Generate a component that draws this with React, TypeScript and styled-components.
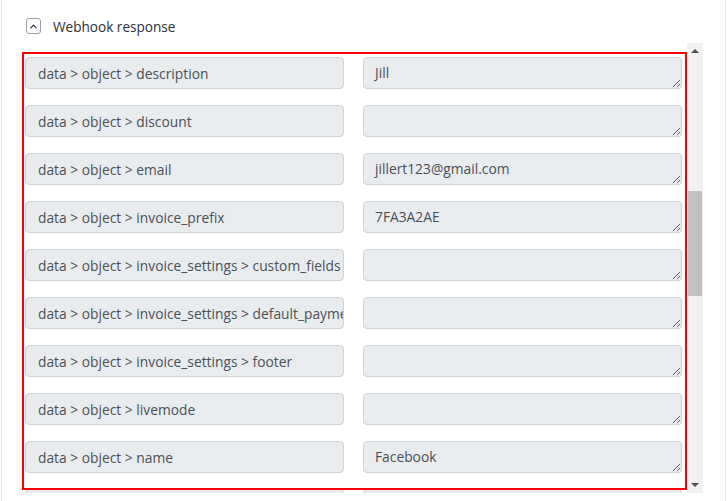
import React from "react";
import styled, { createGlobalStyle } from "styled-components";
import { ChevronUp } from "lucide-react";

const GlobalStyle = createGlobalStyle`
  html, body {
    margin: 0;
    padding: 0;
    background: #fff;
  }
  body {
    font-family: "Open Sans", "Liberation Sans", sans-serif;
    color: #495057;
  }
`;

const Card = styled.div`
  margin-left: 1px;
  width: 725px;
  min-height: 501px;
  box-sizing: border-box;
  border-left: 1px solid #e4e8ee;
  border-right: 1px solid #e4e8ee;
  padding: 16px 0 0 20px;
`;

const Header = styled.div`
  display: flex;
  align-items: center;
  gap: 12px;
  height: 20px;
  padding-left: 4px;
`;

const ToggleButton = styled.button`
  width: 15px;
  height: 16px;
  padding: 0;
  display: flex;
  align-items: center;
  justify-content: center;
  border: 1px solid #9aa0a6;
  border-radius: 3px;
  background: #fff;
  color: #1c2a44;
`;

const Title = styled.span`
  font-size: 13.6px;
  color: #2c3038;
`;

const ScrollArea = styled.div`
  position: relative;
  margin-top: 7px;
  width: 681px;
  height: 450px;
  display: flex;
`;

const Scroller = styled.div`
  flex: 1;
  height: 100%;
  overflow-y: scroll;
  scrollbar-width: none;
  &::-webkit-scrollbar {
    display: none;
  }
`;

const Rows = styled.div`
  display: flex;
  flex-direction: column;
  gap: 16px;
  padding: 8px 5px 32px 3px;
`;

const Row = styled.div`
  display: grid;
  grid-template-columns: 1fr 1fr;
  column-gap: 19px;
  align-items: start;
`;

const KeyField = styled.div`
  height: 32px;
  box-sizing: border-box;
  padding: 0 12px;
  display: flex;
  align-items: center;
  background: #e9ecef;
  border: 1px solid #ced4da;
  border-radius: 4px;
  font-size: 13.8px;
  color: #495057;
  white-space: nowrap;
  overflow: hidden;
`;

const ValueField = styled.textarea`
  display: block;
  width: 100%;
  height: 32px;
  box-sizing: border-box;
  margin: 0;
  padding: 5px 11px 3px;
  background: #e9ecef;
  border: 1px solid #ced4da;
  border-radius: 4px;
  font-family: "Open Sans", "Liberation Sans", sans-serif;
  font-size: 13.8px;
  line-height: 20px;
  color: #495057;
  resize: vertical;
  overflow: hidden;
  outline: none;
`;

const ScrollBar = styled.div`
  width: 16px;
  height: 100%;
  flex-shrink: 0;
  display: flex;
  flex-direction: column;
  background: #f1f1f1;
`;

const ScrollButton = styled.div<{ $down?: boolean }>`
  height: 16px;
  flex-shrink: 0;
  display: flex;
  align-items: center;
  justify-content: center;
  &::after {
    content: "";
    width: 0;
    height: 0;
    border-left: 4px solid transparent;
    border-right: 4px solid transparent;
    ${(p) =>
      p.$down
        ? "border-top: 4px solid #505050;"
        : "border-bottom: 4px solid #505050;"}
  }
`;

const Track = styled.div`
  flex: 1;
  position: relative;
`;

const Thumb = styled.div<{ $top: number; $height: number }>`
  position: absolute;
  left: 1px;
  right: 1px;
  top: ${(p) => p.$top}px;
  height: ${(p) => p.$height}px;
  background: #c1c1c1;
`;

const Highlight = styled.div`
  position: absolute;
  left: 0;
  top: 9px;
  width: 665px;
  height: 438px;
  box-sizing: border-box;
  border: 2px solid #ff0000;
  pointer-events: none;
`;

const fields: [string, string][] = [
  ["data > id", "evt_1NQ2kLJ7FA3A2AE"],
  ["data > object", "event"],
  ["data > api_version", "2022-11-15"],
  ["data > created", "1688651421"],
  ["data > object > id", "cus_O8JD2kFA3A2AE"],
  ["data > object > object", "customer"],
  ["data > object > address", ""],
  ["data > object > balance", "0"],
  ["data > object > created", "1688651421"],
  ["data > object > currency", ""],
  ["data > object > default_source", ""],
  ["data > object > delinquent", ""],
  ["data > object > description", "Jill"],
  ["data > object > discount", ""],
  ["data > object > email", "jillert123@gmail.com"],
  ["data > object > invoice_prefix", "7FA3A2AE"],
  ["data > object > invoice_settings > custom_fields", ""],
  ["data > object > invoice_settings > default_payment_method", ""],
  ["data > object > invoice_settings > footer", ""],
  ["data > object > livemode", ""],
  ["data > object > name", "Facebook"],
  ["data > object > next_invoice_sequence", "1"],
  ["data > object > phone", ""],
  ["data > object > preferred_locales", ""],
  ["data > object > shipping", ""],
  ["data > object > tax_exempt", "none"],
  ["data > object > test_clock", ""],
  ["livemode", ""],
  ["pending_webhooks", "2"],
  ["request > id", "req_Ul8oVSGsqHTkxE"],
  ["request > idempotency_key", ""],
  ["type", "customer.created"],
  ["id", "evt_1NQ2kLJ7FA3A2AE"],
  ["object", "event"],
  ["api_version", "2022-11-15"],
  ["created", "1688651421"],
  ["account", ""],
];

export default function App() {
  const scrollRef = React.useRef<HTMLDivElement>(null);

  React.useLayoutEffect(() => {
    if (scrollRef.current) scrollRef.current.scrollTop = 570;
  }, []);

  return (
    <>
      <GlobalStyle />
      <Card>
        <Header>
          <ToggleButton>
            <ChevronUp size={11} strokeWidth={2.6} />
          </ToggleButton>
          <Title>Webhook response</Title>
        </Header>
        <ScrollArea>
          <Scroller ref={scrollRef}>
            <Rows>
              {fields.map(([key, value]) => (
                <Row key={key}>
                  <KeyField>{key}</KeyField>
                  <ValueField readOnly value={value} />
                </Row>
              ))}
            </Rows>
          </Scroller>
          <ScrollBar>
            <ScrollButton />
            <Track>
              <Thumb $top={132} $height={105} />
            </Track>
            <ScrollButton $down />
          </ScrollBar>
          <Highlight />
        </ScrollArea>
      </Card>
    </>
  );
}
